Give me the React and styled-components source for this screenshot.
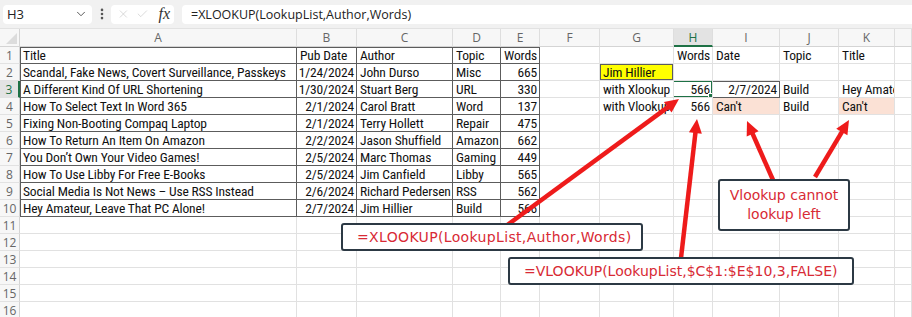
import React from "react";
import styled, { createGlobalStyle } from "styled-components";
import { X, Check, ChevronDown, EllipsisVertical } from "lucide-react";

const GlobalStyle = createGlobalStyle`
  html, body {
    margin: 0;
    padding: 0;
    background: #ffffff;
  }
  body {
    width: 912px;
    height: 317px;
    overflow: hidden;
    font-family: "Liberation Sans", Arial, sans-serif;
  }
`;

const CELL_FONT = `"Liberation Sans Narrow", "Roboto Condensed", "Liberation Sans", sans-serif`;
const NOTE_FONT = `"DejaVu Sans", Verdana, sans-serif`;

const LETTERS = ["A", "B", "C", "D", "E", "F", "G", "H", "I", "J", "K", "L"];
const RIGHT = ["B", "E", "H", "I"];

const TABLE = [
  ["Title", "Pub Date", "Author", "Topic", "Words"],
  ["Scandal, Fake News, Covert Surveillance, Passkeys", "1/24/2024", "John Durso", "Misc", "665"],
  ["A Different Kind Of URL Shortening", "1/30/2024", "Stuart Berg", "URL", "330"],
  ["How To Select Text In Word 365", "2/1/2024", "Carol Bratt", "Word", "137"],
  ["Fixing Non-Booting Compaq Laptop", "2/1/2024", "Terry Hollett", "Repair", "475"],
  ["How To Return An Item On Amazon", "2/2/2024", "Jason Shuffield", "Amazon", "662"],
  ["You Don’t Own Your Video Games!", "2/5/2024", "Marc Thomas", "Gaming", "449"],
  ["How To Use Libby For Free E-Books", "2/5/2024", "Jim Canfield", "Libby", "565"],
  ["Social Media Is Not News – Use RSS Instead", "2/6/2024", "Richard Pedersen", "RSS", "562"],
  ["Hey Amateur, Leave That PC Alone!", "2/7/2024", "Jim Hillier", "Build", "566"],
];

const EXTRA = {
  H1: "Words",
  I1: "Date",
  J1: "Topic",
  K1: "Title",
  G2: "Jim Hillier",
  G3: "with Xlookup",
  H3: "566",
  I3: "2/7/2024",
  J3: "Build",
  K3: "Hey Amateur, Leave That PC Alone!",
  G4: "with Vlookup",
  H4: "566",
  I4: "Can't",
  J4: "Build",
  K4: "Can't",
};

const FILL = { G2: "#ffff00", I4: "#fbe1d5", K4: "#fbe1d5" };

const Page = styled.div`
  position: relative;
  width: 912px;
  height: 317px;
  overflow: hidden;
`;

const FormulaBar = styled.div`
  height: 29px;
  box-sizing: border-box;
  background: #f1f1f1;
  display: flex;
  align-items: center;
  padding: 0 0 0 3px;
  border-bottom: 1px solid #e2e2e2;
`;

const NameBox = styled.div`
  width: 89px;
  height: 19px;
  box-sizing: border-box;
  background: #fff;
  border-radius: 4px;
  display: flex;
  align-items: center;
  justify-content: space-between;
  padding: 0 4px 0 4px;
  font-size: 13px;
  color: #222;
  font-family: "Open Sans", "Liberation Sans", sans-serif;
`;

const Dots = styled.div`
  width: 19px;
  display: flex;
  justify-content: center;
  color: #555;
`;

const IconBox = styled.div`
  width: 63px;
  height: 19px;
  box-sizing: border-box;
  background: #fff;
  border-radius: 4px;
  display: flex;
  align-items: center;
  gap: 6px;
  padding: 0 4px 0 6px;
  color: #c4c4c4;
`;

const Fx = styled.span`
  font-family: "Liberation Serif", "DejaVu Serif", serif;
  font-style: italic;
  font-size: 16px;
  color: #333;
  margin-left: 4px;
`;

const FormulaInput = styled.div`
  flex: 1;
  height: 19px;
  margin-left: 8px;
  background: #fff;
  border-radius: 4px 0 0 4px;
  display: flex;
  align-items: center;
  padding-left: 9px;
  font-size: 12.5px;
  color: #222;
  font-family: "Open Sans", "Liberation Sans", sans-serif;
`;

const Grid = styled.div`
  display: grid;
  grid-template-columns: 20px 277px 60px 96px 48px 39px 60px 74px 39px 67px 59px 56px 1fr;
  grid-template-rows: 18px repeat(16, 17px);
`;

const ColHead = styled.div`
  box-sizing: border-box;
  background: ${(p) => (p.$active ? "#e3e3e3" : "#f7f7f7")};
  border-right: 1px solid #dedede;
  border-bottom: ${(p) => (p.$active ? "2px solid #1e7145" : "1px solid #d4d4d4")};
  display: flex;
  align-items: center;
  justify-content: center;
  font-family: "Open Sans", "Liberation Sans", sans-serif;
  font-size: 12px;
  color: ${(p) => (p.$active ? "#1e7145" : "#666")};
`;

const Corner = styled.div`
  box-sizing: border-box;
  background: #f7f7f7;
  border-right: 1px solid #d4d4d4;
  border-bottom: 1px solid #d4d4d4;
  position: relative;
  &::after {
    content: "";
    position: absolute;
    right: 2px;
    bottom: 2px;
    border-left: 11px solid transparent;
    border-bottom: 11px solid #dcdcdc;
  }
`;

const RowHead = styled.div`
  box-sizing: border-box;
  background: ${(p) => (p.$active ? "#e3e3e3" : "#f7f7f7")};
  border-right: ${(p) => (p.$active ? "2px solid #1e7145" : "1px solid #d4d4d4")};
  border-bottom: 1px solid #e2e2e2;
  display: flex;
  align-items: center;
  justify-content: center;
  font-family: "Open Sans", "Liberation Sans", sans-serif;
  font-size: 12px;
  color: ${(p) => (p.$active ? "#1e7145" : "#666")};
`;

const Cell = styled.div`
  position: relative;
  box-sizing: border-box;
  background: ${(p) => p.$fill || "#fff"};
  border-right: 1px solid ${(p) => (p.$boxed ? "#5c5c5c" : "#e1e1e1")};
  border-bottom: 1px solid ${(p) => (p.$boxed ? "#5c5c5c" : "#e1e1e1")};
  box-shadow: ${(p) => p.$edge || "none"};
  display: flex;
  align-items: flex-end;
  justify-content: ${(p) => (p.$right ? "flex-end" : "flex-start")};
  padding: 0 2px 0 3px;
  font-family: ${CELL_FONT};
  font-size: 13.5px;
  letter-spacing: -0.15px;
  line-height: 16px;
  color: #111;
  white-space: nowrap;
  overflow: hidden;
`;

const Selected = styled.div`
  position: absolute;
  inset: -1px -1px -1px -2px;
  border: 2px solid #1e7145;
  pointer-events: none;
  &::after {
    content: "";
    position: absolute;
    right: -4px;
    bottom: -4px;
    width: 5px;
    height: 5px;
    background: #1e7145;
    border: 1px solid #fff;
  }
`;

const Overlay = styled.svg`
  position: absolute;
  left: 0;
  top: 0;
  pointer-events: none;
`;

const Note = styled.div`
  position: absolute;
  left: ${(p) => p.$x}px;
  top: ${(p) => p.$y}px;
  width: ${(p) => p.$w}px;
  height: ${(p) => p.$h}px;
  box-sizing: border-box;
  background: #fff;
  border: 2px solid #2c3944;
  border-radius: 3px;
  display: flex;
  align-items: center;
  justify-content: ${(p) => (p.$center ? "center" : "flex-start")};
  text-align: center;
  padding-left: ${(p) => (p.$center ? 0 : 14)}px;
  font-family: ${NOTE_FONT};
  font-size: 14px;
  letter-spacing: ${(p) => p.$track || 0}px;
  line-height: 19px;
  color: #d82a35;
  white-space: pre;
`;

const ARROWS = [
  [506, 226, 679, 99],
  [681, 258, 697, 119],
  [773, 180, 747, 121],
  [815, 177, 849, 120],
];

const Arrow = ({ x1, y1, x2, y2 }) => {
  const dx = x2 - x1;
  const dy = y2 - y1;
  const len = Math.hypot(dx, dy);
  const ux = dx / len;
  const uy = dy / len;
  const hl = 14;
  const hw = 6.5;
  const bx = x2 - ux * hl;
  const by = y2 - uy * hl;
  const pts = [
    `${x2},${y2}`,
    `${bx - uy * hw},${by + ux * hw}`,
    `${bx + uy * hw},${by - ux * hw}`,
  ].join(" ");
  return (
    <g>
      <line x1={x1} y1={y1} x2={bx + ux * 2} y2={by + uy * 2} stroke="#ee1b1b" strokeWidth="4.5" />
      <polygon points={pts} fill="#ee1b1b" />
    </g>
  );
};

const cellProps = (col, row) => {
  const ci = LETTERS.indexOf(col);
  const inTable = ci < 5 && row >= 1 && row <= 10;
  const key = `${col}${row}`;
  let text = "";
  if (inTable) text = TABLE[row - 1][ci];
  else if (EXTRA[key]) text = EXTRA[key];
  const shadows = [];
  if (inTable && row === 1) shadows.push("inset 0 1px 0 #5c5c5c");
  if (inTable && ci === 0) shadows.push("inset 1px 0 0 #5c5c5c");
  if (key === "G2") shadows.push("inset 0 0 0 1px #5c5c5c");
  if (key === "I3") shadows.push("inset 0 1px 0 #5c5c5c");
  const boxed = inTable || key === "I3";
  const right = row > 1 && RIGHT.includes(col) && key !== "I4";
  return {
    key,
    text,
    boxed,
    right,
    fill: FILL[key],
    edge: shadows.length ? shadows.join(", ") : undefined,
  };
};

const Sheet = () => {
  const rows = [];
  for (let r = 1; r <= 16; r += 1) {
    rows.push(
      <RowHead key={`r${r}`} $active={r === 3}>
        {r}
      </RowHead>
    );
    LETTERS.forEach((col) => {
      const c = cellProps(col, r);
      rows.push(
        <Cell key={c.key} $boxed={c.boxed} $right={c.right} $fill={c.fill} $edge={c.edge}>
          {c.text}
          {c.key === "H3" && <Selected />}
        </Cell>
      );
    });
  }
  return (
    <Grid>
      <Corner />
      {LETTERS.map((l) => (
        <ColHead key={l} $active={l === "H"}>
          {l === "L" ? "" : l}
        </ColHead>
      ))}
      {rows}
    </Grid>
  );
};

const App = () => (
  <Page>
    <GlobalStyle />
    <FormulaBar>
      <NameBox>
        H3
        <ChevronDown size={14} strokeWidth={1.5} color="#444" />
      </NameBox>
      <Dots>
        <EllipsisVertical size={14} strokeWidth={2.5} />
      </Dots>
      <IconBox>
        <X size={16} strokeWidth={1.2} />
        <Check size={16} strokeWidth={1.2} />
        <Fx>fx</Fx>
      </IconBox>
      <FormulaInput>=XLOOKUP(LookupList,Author,Words)</FormulaInput>
    </FormulaBar>
    <Sheet />
    <Overlay width="912" height="317" viewBox="0 0 912 317">
      {ARROWS.map(([x1, y1, x2, y2], i) => (
        <Arrow key={i} x1={x1} y1={y1} x2={x2} y2={y2} />
      ))}
    </Overlay>
    <Note $x={341} $y={223} $w={302} $h={28} $track={0.35}>
      =XLOOKUP(LookupList,Author,Words)
    </Note>
    <Note $x={508} $y={257} $w={346} $h={28}>
      =VLOOKUP(LookupList,$C$1:$E$10,3,FALSE)
    </Note>
    <Note $x={718} $y={179} $w={132} $h={52} $center>
      {"Vlookup cannot\nlookup left"}
    </Note>
  </Page>
);

export default App;
